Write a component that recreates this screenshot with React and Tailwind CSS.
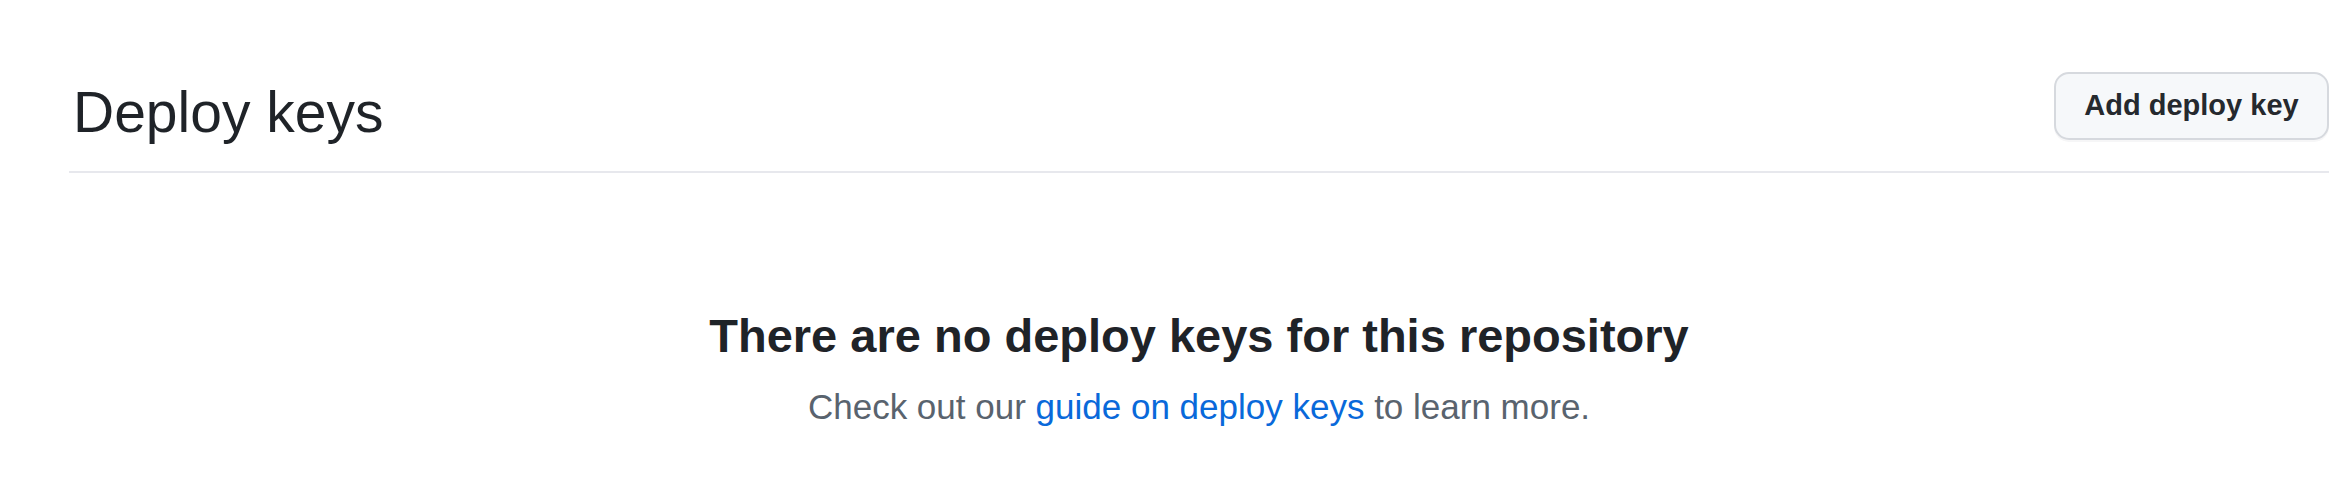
export default function App() {
  return (
    <div
      className="bg-white w-full h-[504px] pl-[69px] pr-[22px]"
      style={{ fontFamily: '"Liberation Sans", Arial, sans-serif' }}
    >
      <div className="flex items-start justify-between pt-[66px] pb-[14px] border-b-2 border-[#e7e8ed]">
        <h2 className="text-[57px] leading-[90px] font-normal text-[#1f2328] pl-[4px] pt-[1px]">
          Deploy keys
        </h2>
        <button className="mt-[6px] w-[275px] h-[68px] rounded-[15px] border-2 border-[#d6d9de] bg-[#f6f8fa] text-[29px] font-semibold text-[#25292e] shadow-[0_2px_0_rgba(31,35,40,0.04)]">
          Add deploy key
        </button>
      </div>

      <div className="flex flex-col items-center pt-[133px]">
        <h3 className="text-[47px] leading-[60px] font-bold text-[#1f2328]">
          There are no deploy keys for this repository
        </h3>
        <p className="mt-[15px] text-[35px] leading-[52px] text-[#59636e]">
          Check out our{" "}
          <a href="#" className="text-[#0969da]">
            guide on deploy keys
          </a>{" "}
          to learn more.
        </p>
      </div>
    </div>
  );
}
